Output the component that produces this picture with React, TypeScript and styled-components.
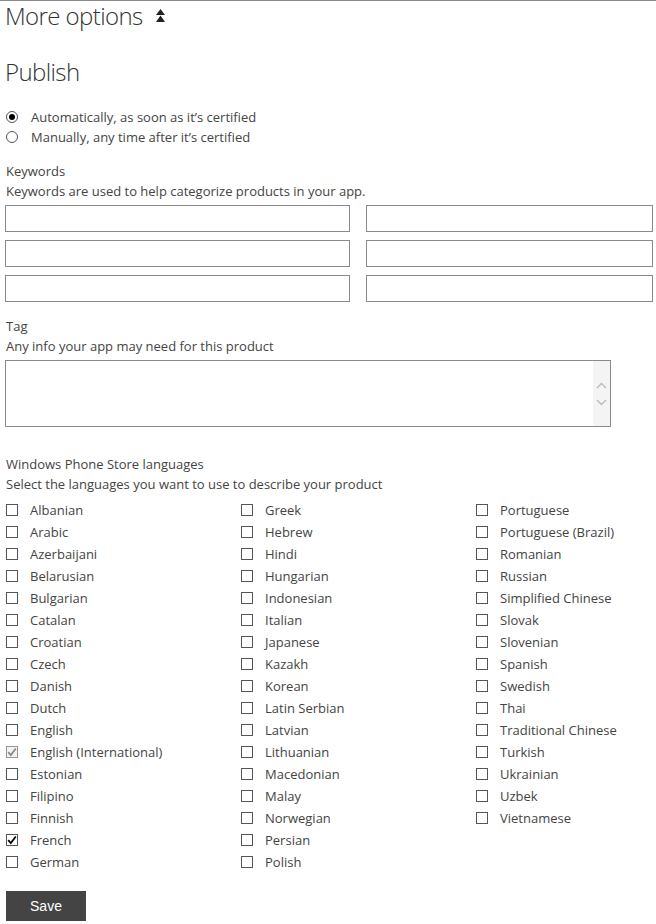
import React, { useState } from 'react';
import styled, { createGlobalStyle } from 'styled-components';

const GlobalStyle = createGlobalStyle`
  html, body {
    margin: 0;
    padding: 0;
    background: #fff;
  }
  body {
    font-family: 'Open Sans', 'Noto Sans', sans-serif;
    color: #444;
  }
`;

const Page = styled.div`
  width: 656px;
  border-top: 1px solid #8a8a8a;
  padding: 0 0 0 6px;
  box-sizing: border-box;
`;

const Heading = styled.h2<{ $top?: number }>`
  margin: ${(p) => p.$top ?? 0}px 0 0 -1px;
  font-size: 24px;
  line-height: 29px;
  font-weight: 300;
  letter-spacing: -0.6px;
  color: #333;
  display: flex;
  align-items: center;
  gap: 12px;
`;

const RadioGroup = styled.div`
  margin-top: 21px;
  display: flex;
  flex-direction: column;
`;

const OptionRow = styled.label`
  display: flex;
  align-items: center;
  height: 20px;
  font-size: 13px;
  color: #444;
  cursor: pointer;
`;

const RadioDot = styled.span<{ $on: boolean }>`
  width: 12px;
  height: 12px;
  border: 1px solid #555;
  border-radius: 50%;
  box-sizing: border-box;
  margin-right: 13px;
  display: flex;
  align-items: center;
  justify-content: center;

  &::after {
    content: '';
    width: 6px;
    height: 6px;
    border-radius: 50%;
    background: ${(p) => (p.$on ? '#000' : 'transparent')};
  }
`;

const Label = styled.div<{ $top: number }>`
  margin-top: ${(p) => p.$top}px;
  font-size: 13px;
  line-height: 20px;
  color: #444;
`;

const Hint = styled.div`
  font-size: 13px;
  line-height: 20px;
  color: #444;
`;

const KeywordGrid = styled.div`
  display: grid;
  grid-template-columns: 345px 287px;
  column-gap: 16px;
  row-gap: 8px;
  margin: 4px 0 0 -1px;
`;

const TextInput = styled.input`
  height: 27px;
  min-width: 0;
  box-sizing: border-box;
  border: 1px solid #8a8a8a;
  padding: 0 6px;
  font: inherit;
  font-size: 13px;
  outline: none;
`;

const TextBox = styled.div`
  margin: 4px 0 0 -1px;
  width: 606px;
  height: 67px;
  box-sizing: border-box;
  border: 1px solid #8a8a8a;
  display: flex;
`;

const Area = styled.textarea`
  flex: 1;
  border: none;
  resize: none;
  outline: none;
  font: inherit;
  font-size: 13px;
  padding: 4px 6px;
`;

const ScrollTrack = styled.div`
  width: 17px;
  background: #f4f4f4;
  display: flex;
  flex-direction: column;
  align-items: center;
  justify-content: center;
  gap: 10px;
`;

const LangGrid = styled.div`
  margin-top: 5px;
  display: grid;
  grid-auto-flow: column;
  grid-template-rows: repeat(17, 22px);
  grid-template-columns: 235px 235px 1fr;
`;

const LangItem = styled.label`
  display: flex;
  align-items: center;
  font-size: 13px;
  color: #444;
  cursor: pointer;
`;

const Box = styled.span<{ $dim?: boolean }>`
  width: 12px;
  height: 12px;
  border: 1px solid ${(p) => (p.$dim ? '#999' : '#555')};
  box-sizing: border-box;
  margin-right: 12px;
  display: flex;
  align-items: center;
  justify-content: center;
  background: ${(p) => (p.$dim ? '#f2f2f2' : '#fff')};
`;

const SaveButton = styled.button`
  margin-top: 18px;
  width: 80px;
  height: 30px;
  border: none;
  background: #444;
  color: #fff;
  font-family: 'Liberation Sans', Arial, sans-serif;
  font-size: 14px;
  cursor: pointer;
  display: block;
`;

const columns = [
  'Albanian', 'Arabic', 'Azerbaijani', 'Belarusian', 'Bulgarian', 'Catalan', 'Croatian', 'Czech',
  'Danish', 'Dutch', 'English', 'English (International)', 'Estonian', 'Filipino', 'Finnish',
  'French', 'German',
  'Greek', 'Hebrew', 'Hindi', 'Hungarian', 'Indonesian', 'Italian', 'Japanese', 'Kazakh', 'Korean',
  'Latin Serbian', 'Latvian', 'Lithuanian', 'Macedonian', 'Malay', 'Norwegian', 'Persian', 'Polish',
  'Portuguese', 'Portuguese (Brazil)', 'Romanian', 'Russian', 'Simplified Chinese', 'Slovak',
  'Slovenian', 'Spanish', 'Swedish', 'Thai', 'Traditional Chinese', 'Turkish', 'Ukrainian', 'Uzbek',
  'Vietnamese',
];

const DoubleUp = () => (
  <svg width="11" height="15" viewBox="0 0 11 15">
    <path d="M5.5 1 L10 7 L1 7 Z" fill="#222" />
    <path d="M5.5 7.5 L10 14 L1 14 Z" fill="#222" />
  </svg>
);

const Check = ({ color }: { color: string }) => (
  <svg width="10" height="10" viewBox="0 0 10 10">
    <path d="M1.2 5.2 L3.8 8 L8.8 1.5" fill="none" stroke={color} strokeWidth="1.8" />
  </svg>
);

const Chevron = ({ up }: { up?: boolean }) => (
  <svg width="11" height="7" viewBox="0 0 11 7">
    <path d={up ? 'M1 6 L5.5 1.5 L10 6' : 'M1 1 L5.5 5.5 L10 1'} fill="none" stroke="#bbb" strokeWidth="1.4" />
  </svg>
);

export default function App() {
  const [publish, setPublish] = useState<'auto' | 'manual'>('auto');
  const [checked, setChecked] = useState<Record<string, boolean>>({ French: true });

  const toggle = (name: string) => {
    if (name === 'English (International)') return;
    setChecked((c) => ({ ...c, [name]: !c[name] }));
  };

  return (
    <Page>
      <GlobalStyle />
      <Heading>
        More options <DoubleUp />
      </Heading>
      <Heading $top={27}>Publish</Heading>

      <RadioGroup>
        <OptionRow onClick={() => setPublish('auto')}>
          <RadioDot $on={publish === 'auto'} />
          Automatically, as soon as it’s certified
        </OptionRow>
        <OptionRow onClick={() => setPublish('manual')}>
          <RadioDot $on={publish === 'manual'} />
          Manually, any time after it’s certified
        </OptionRow>
      </RadioGroup>

      <Label $top={14}>Keywords</Label>
      <Hint>Keywords are used to help categorize products in your app.</Hint>
      <KeywordGrid>
        {Array.from({ length: 6 }).map((_, i) => (
          <TextInput key={i} />
        ))}
      </KeywordGrid>

      <Label $top={14}>Tag</Label>
      <Hint>Any info your app may need for this product</Hint>
      <TextBox>
        <Area />
        <ScrollTrack>
          <Chevron up />
          <Chevron />
        </ScrollTrack>
      </TextBox>

      <Label $top={27}>Windows Phone Store languages</Label>
      <Hint>Select the languages you want to use to describe your product</Hint>
      <LangGrid>
        {columns.map((name) => {
          const dim = name === 'English (International)';
          return (
            <LangItem key={name} onClick={() => toggle(name)}>
              <Box $dim={dim}>
                {dim ? <Check color="#888" /> : checked[name] ? <Check color="#000" /> : null}
              </Box>
              {name}
            </LangItem>
          );
        })}
      </LangGrid>

      <SaveButton>Save</SaveButton>
    </Page>
  );
}
